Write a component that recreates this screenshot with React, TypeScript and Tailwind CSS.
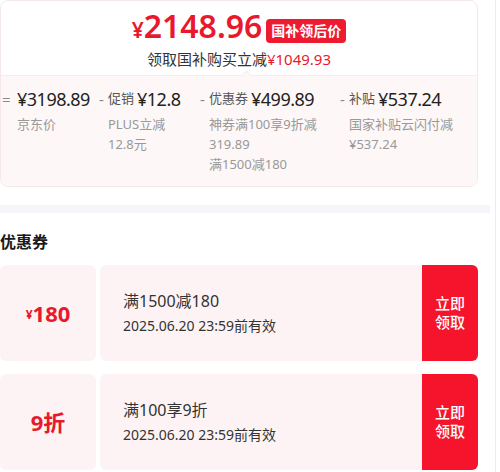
const font = "font-['Noto_Sans','Noto_Sans_CJK_SC',sans-serif]";

const parts = [
  { sign: "=", label: "", price: "¥3198.89", lines: ["京东价"], w: "w-[97px]", sw: "w-[16px]" },
  { sign: "-", label: "促销", price: "¥12.8", lines: ["PLUS立减", "12.8元"], w: "w-[101px]", sw: "w-[10px]" },
  { sign: "-", label: "优惠券", price: "¥499.89", lines: ["神券满100享9折减", "319.89", "满1500减180"], w: "w-[140px]", sw: "w-[10px]" },
  { sign: "-", label: "补贴", price: "¥537.24", lines: ["国家补贴云闪付减", "¥537.24"], w: "flex-1", sw: "w-[10px]" },
];

const coupons = [
  { big: "180", yen: true, title: "满1500减180", date: "2025.06.20 23:59前有效" },
  { big: "9折", yen: false, title: "满100享9折", date: "2025.06.20 23:59前有效" },
];

function PriceCard() {
  return (
    <div className="w-[478px] rounded-lg border border-[#f6e8ea] overflow-hidden bg-white">
      <div className="flex flex-col items-center pt-[3px] pb-[6px]">
        <div className="flex items-end h-[44px]">
          <span className="text-[#e8192c] text-[32px] leading-[44px] font-semibold">
            <span className="text-[21px] leading-none">¥</span>2148.96
          </span>
          <span className="ml-[4px] mb-[5px] h-[24px] px-[5px] rounded-sm bg-[#ee1a2f] text-white text-[14px] font-bold leading-[24px]">
            国补领后价
          </span>
        </div>
        <div className="mt-[1px] text-[15px] leading-[20px] text-[#333]">
          领取国补购买立减<span className="text-[#e8192c]">¥1049.93</span>
        </div>
      </div>
      <div className="relative bg-[#fdf7f7] border-t border-[#f8ebec] pt-[11px] pb-[12px] flex">
        <div className="absolute left-[242px] top-[-4px] w-[7px] h-[7px] rotate-45 bg-[#fdf7f7] border-l border-t border-[#f8ebec]" />
        {parts.map((p, i) => (
          <div key={i} className={`${p.w} flex`}>
            <span className={`${p.sw} text-[15px] leading-[24px] text-[#888] pl-[1px]`}>{p.sign}</span>
            <div className="flex flex-col">
              <div className="flex items-center h-[24px] whitespace-nowrap">
                {p.label && <span className="text-[13px] text-[#555] mr-[3px]">{p.label}</span>}
                <span className="text-[18px] tracking-[-0.5px] text-[#222]">{p.price}</span>
              </div>
              <div className="mt-[3px] flex flex-col">
                {p.lines.map((l, j) => (
                  <span key={j} className="text-[13px] leading-[20px] text-[#999] whitespace-nowrap">{l}</span>
                ))}
              </div>
            </div>
          </div>
        ))}
      </div>
    </div>
  );
}

function Coupon({ c }: { c: (typeof coupons)[number] }) {
  return (
    <div className="relative flex w-[478px] h-[96px]">
      <div className="w-[96px] rounded-md bg-[#fdf3f4] flex items-center justify-center text-[#e8192c] font-bold">
        {c.yen && <span className="text-[12px] mt-[4px]">¥</span>}
        <span className="text-[22px]">{c.big}</span>
      </div>
      <div className="ml-[4px] flex-1 rounded-l-md bg-[#fdf3f4] flex flex-col justify-center pl-[23px]">
        <span className="text-[16px] leading-[22px] text-[#333]">{c.title}</span>
        <span className="text-[14px] leading-[22px] mt-[3px] text-[#333]">{c.date}</span>
      </div>
      <div className="w-[56px] rounded-r-md bg-[#f5142c] flex items-center justify-center">
        <span className="text-white text-[15px] leading-[19px] font-medium text-center">
          立即
          <br />
          领取
        </span>
      </div>
      <div className="absolute left-[94px] top-[-4px] w-[8px] h-[8px] rounded-full bg-white" />
      <div className="absolute left-[94px] bottom-[-4px] w-[8px] h-[8px] rounded-full bg-white" />
    </div>
  );
}

export default function App() {
  return (
    <div className={`${font} w-[500px] h-[472px] overflow-hidden bg-white flex`}>
      <div className="w-[496px] border-r border-[#ececec] flex flex-col">
        <div className="w-[490px] flex flex-col">
          <PriceCard />
          <div className="mt-[18px] h-[8px] bg-[#f4f6fa]" />
          <div className="mt-[17px] text-[16px] leading-[24px] font-bold text-[#1a1a1a]">优惠券</div>
          <div className="mt-[11px] flex flex-col gap-[13px]">
            {coupons.map((c, i) => (
              <Coupon key={i} c={c} />
            ))}
          </div>
        </div>
      </div>
    </div>
  );
}
